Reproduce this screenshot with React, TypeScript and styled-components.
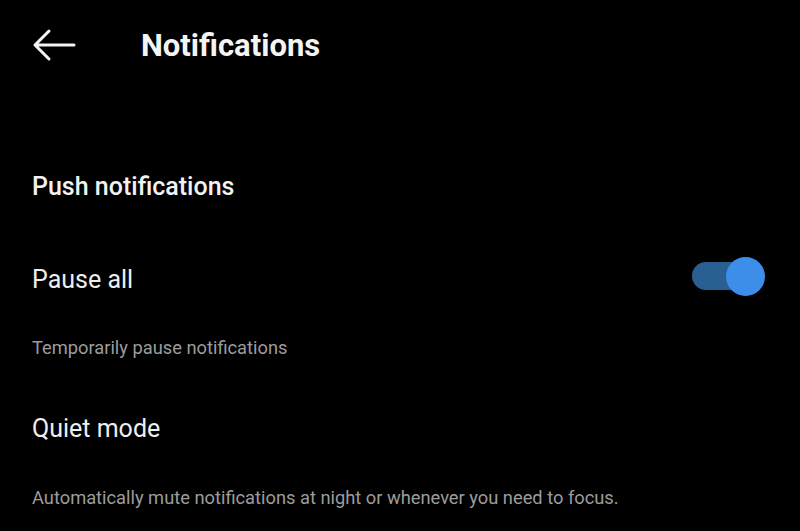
import React, {FC, useState} from 'react';
import styled, {createGlobalStyle} from 'styled-components';

const GlobalStyle = createGlobalStyle`
  html, body {
    margin: 0;
    padding: 0;
    background: #000;
  }
  body {
    font-family: Roboto, "Noto Sans", sans-serif;
    color: #f2f2f2;
  }
`;

const Page = styled.div`
  width: 800px;
  height: 531px;
  background: #000;
  padding: 0 34px 0 32px;
  box-sizing: border-box;
  overflow: hidden;
`;

const Header = styled.header`
  height: 90px;
  display: flex;
  align-items: center;
  gap: 64px;
`;

const BackButton = styled.button`
  width: 45px;
  height: 34px;
  padding: 0;
  border: none;
  background: none;
  display: flex;
  align-items: center;
  cursor: pointer;
`;

const Title = styled.h1`
  margin: 0;
  font-size: 31px;
  font-weight: 700;
  color: #f4f4f4;
`;

const SectionTitle = styled.h2`
  margin: 50px 0 0;
  height: 92px;
  display: flex;
  align-items: center;
  font-size: 25px;
  font-weight: 500;
  color: #f2f2f2;
`;

const Row = styled.div<{$h: number}>`
  display: flex;
  align-items: center;
  justify-content: space-between;
  height: ${p => p.$h}px;
`;

const Label = styled.div`
  font-size: 25px;
  font-weight: 400;
  color: #eeeeee;
`;

const Hint = styled.div<{$h: number}>`
  height: ${p => p.$h}px;
  display: flex;
  align-items: center;
  font-size: 18.3px;
  color: #9c9c9c;
`;

const Track = styled.button<{$on: boolean}>`
  position: relative;
  width: 74px;
  height: 40px;
  margin-bottom: 6px;
  padding: 0;
  border: none;
  background: none;
  cursor: pointer;

  &::before {
    content: '';
    position: absolute;
    left: 0;
    top: 6px;
    width: 60px;
    height: 28px;
    border-radius: 14px;
    background: ${p => (p.$on ? '#2a5f92' : '#555')};
  }
`;

const Knob = styled.span<{$on: boolean}>`
  position: absolute;
  top: 1px;
  left: ${p => (p.$on ? 34 : 0)}px;
  width: 39px;
  height: 39px;
  border-radius: 50%;
  background: ${p => (p.$on ? '#3c8ee8' : '#ccc')};
`;

const ArrowIcon: FC = () => (
  <svg width="45" height="34" viewBox="0 0 45 34" fill="none">
    <path
      d="M42 17H3M17 3L3 17L17 31"
      stroke="#f4f4f4"
      strokeWidth="3"
      strokeLinecap="round"
      strokeLinejoin="round"
    />
  </svg>
);

const App: FC = () => {
  const [paused, setPaused] = useState(true);

  return (
    <>
      <GlobalStyle />
      <Page>
        <Header>
          <BackButton aria-label="Back">
            <ArrowIcon />
          </BackButton>
          <Title>Notifications</Title>
        </Header>

        <SectionTitle>Push notifications</SectionTitle>

        <Row $h={94}>
          <Label>Pause all</Label>
          <Track $on={paused} onClick={() => setPaused(!paused)} aria-label="Pause all">
            <Knob $on={paused} />
          </Track>
        </Row>
        <Hint $h={42}>Temporarily pause notifications</Hint>

        <Row $h={120}>
          <Label>Quiet mode</Label>
        </Row>
        <Hint $h={18}>Automatically mute notifications at night or whenever you need to focus.</Hint>
      </Page>
    </>
  );
};

export default App;
